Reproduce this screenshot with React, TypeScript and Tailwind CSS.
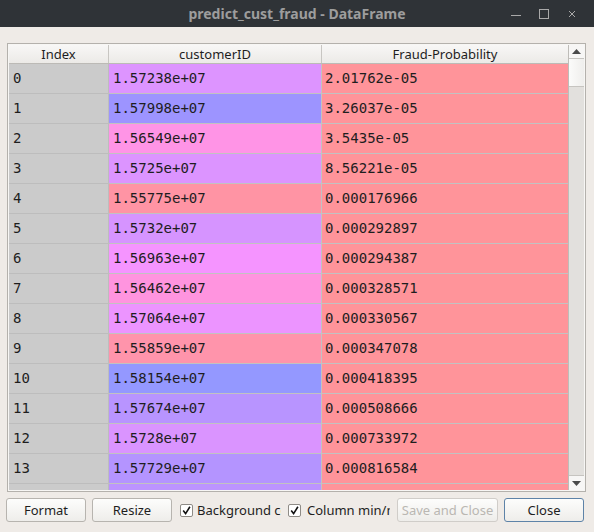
import React from "react";

// Spyder-style background: hsv(h, .7, 1) at alpha .6 over white
function cellColor(h: number) {
  const s = 0.7;
  const v = 1;
  const hh = (h % 1) * 6;
  const i = Math.floor(hh);
  const f = hh - i;
  const p = v * (1 - s);
  const q = v * (1 - s * f);
  const t = v * (1 - s * (1 - f));
  const table = [
    [v, t, p],
    [q, v, p],
    [p, v, t],
    [p, q, v],
    [t, p, v],
    [v, p, q],
  ];
  const [r, g, b] = table[i];
  const mix = (c: number) => Math.round(255 * (0.4 + 0.6 * c));
  return `rgb(${mix(r)},${mix(g)},${mix(b)})`;
}

const ID_MIN = 15565714;
const ID_MAX = 15815443;
const idHue = (v: number) => 0.66 + 0.33 * ((ID_MAX - v) / (ID_MAX - ID_MIN));
const probHue = (v: number) => 0.66 + 0.33 * ((1 - v) / (1 - 2.01762e-5));

const ROWS: [string, number, string][] = [
  ["1.57238e+07", 15723800, "2.01762e-05"],
  ["1.57998e+07", 15799800, "3.26037e-05"],
  ["1.56549e+07", 15654900, "3.5435e-05"],
  ["1.5725e+07", 15725000, "8.56221e-05"],
  ["1.55775e+07", 15577500, "0.000176966"],
  ["1.5732e+07", 15732000, "0.000292897"],
  ["1.56963e+07", 15696300, "0.000294387"],
  ["1.56462e+07", 15646200, "0.000328571"],
  ["1.57064e+07", 15706400, "0.000330567"],
  ["1.55859e+07", 15585900, "0.000347078"],
  ["1.58154e+07", 15815400, "0.000418395"],
  ["1.57674e+07", 15767400, "0.000508666"],
  ["1.5728e+07", 15728000, "0.000733972"],
  ["1.57729e+07", 15772900, "0.000816584"],
  ["1.57635e+07", 15763500, "0.000839121"],
];

const sans = "font-['Noto_Sans','DejaVu_Sans',sans-serif]";
const mono = "font-['DejaVu_Sans_Mono','Liberation_Mono',monospace]";

function Check() {
  return (
    <span className="flex h-[13px] w-[13px] shrink-0 items-center justify-center rounded-[2px] border border-[#8e8b86] bg-white">
      <svg width="9" height="9" viewBox="0 0 9 9">
        <path d="M1.2 4.6 L3.6 7.6 L7.9 0.8" fill="none" stroke="#111" strokeWidth="1.6" />
      </svg>
    </span>
  );
}

function Button({ label, className = "" }: { label: string; className?: string }) {
  return (
    <button
      className={`flex h-[24px] items-center justify-center whitespace-nowrap rounded-[3px] border bg-gradient-to-b from-[#fdfdfc] to-[#eeedea] text-[13px] leading-[20px] ${sans} ${className}`}
    >
      {label}
    </button>
  );
}

export default function App() {
  return (
    <div className="flex h-[532px] w-[594px] flex-col overflow-hidden bg-[#efebe7] text-[#1e1e1e]">
      {/* title bar */}
      <div className="relative flex h-[27px] shrink-0 items-center justify-center bg-[#2f3337]">
        <span className={`text-[14px] font-bold text-[#9d9d9d] ${sans}`}>predict_cust_fraud - DataFrame</span>
        <div className="absolute right-[17px] top-0 flex h-full items-center gap-[18px]">
          <svg width="10" height="10" viewBox="0 0 10 10">
            <path d="M0 6.5 H10" stroke="#a9a9a9" strokeWidth="1" />
          </svg>
          <svg width="10" height="10" viewBox="0 0 10 10">
            <rect x="0.5" y="0.5" width="9" height="9" fill="none" stroke="#a9a9a9" strokeWidth="1" />
          </svg>
          <svg width="10" height="10" viewBox="0 0 10 10">
            <path d="M2 2 L8 8 M8 2 L2 8" stroke="#a9a9a9" strokeWidth="1" />
          </svg>
        </div>
      </div>

      {/* table frame */}
      <div className="pl-[7px] pr-[8px] pt-[16px]">
        <div className="flex h-[449px] border border-[#b4b1ac] bg-[#f7f6f4] p-[1px]">
          <div className="flex min-w-0 flex-1 flex-col overflow-hidden">
            <div className={`flex h-[19px] shrink-0 border-b border-[#bcbab6] bg-gradient-to-b from-[#f8f7f6] to-[#eceae7] text-[13px] leading-[18px] ${sans}`}>
              <div className="w-[100px] shrink-0 border-r border-[#c8c6c2] text-center">Index</div>
              <div className="w-[213px] shrink-0 border-r border-[#c8c6c2] text-center">customerID</div>
              <div className="flex-1 text-center">Fraud-Probability</div>
            </div>
            {ROWS.map(([id, idv, prob], i) => (
              <div key={i} className={`flex h-[30px] shrink-0 text-[14px] leading-[29px] ${mono}`}>
                <div className="w-[100px] shrink-0 border-b border-r border-[#bdbdbd] bg-[#cbcbcb] pl-[4px]">{i}</div>
                <div
                  className="w-[213px] shrink-0 border-b border-r border-[#c2c2c2] pl-[4px]"
                  style={{ backgroundColor: cellColor(idHue(idv)) }}
                >
                  {id}
                </div>
                <div
                  className="flex-1 border-b border-[#c2c2c2] pl-[3px]"
                  style={{ backgroundColor: cellColor(probHue(parseFloat(prob))) }}
                >
                  {prob}
                </div>
              </div>
            ))}
          </div>

          {/* scrollbar */}
          <div className="flex w-[16px] shrink-0 flex-col border-l border-[#bebcb8] bg-[#e2e0dd]">
            <div className="flex h-[14px] shrink-0 items-center justify-center border-b border-[#c6c4c0] bg-[#f7f6f5]">
              <svg width="9" height="5" viewBox="0 0 9 5">
                <path d="M0 5 L4.5 0 L9 5 Z" fill="#4a4a4a" />
              </svg>
            </div>
            <div className="h-[28px] shrink-0 border-b border-[#c6c4c0] bg-gradient-to-r from-[#fbfbfa] to-[#efeeec]" />
            <div className="flex-1" />
            <div className="flex h-[15px] shrink-0 items-center justify-center border-t border-[#c6c4c0] bg-[#f7f6f5]">
              <svg width="9" height="5" viewBox="0 0 9 5">
                <path d="M0 0 L9 0 L4.5 5 Z" fill="#4a4a4a" />
              </svg>
            </div>
          </div>
        </div>
      </div>

      {/* buttons */}
      <div className="mt-[6px] flex items-center pl-[6px]">
        <Button label="Format" className="w-[80px] border-[#b7b4af]" />
        <Button label="Resize" className="ml-[6px] w-[80px] border-[#b7b4af]" />
        <label className={`ml-[8px] flex items-center text-[13px] leading-[20px] ${sans}`}>
          <Check />
          <span className="ml-[4px] w-[84px] overflow-hidden whitespace-nowrap">Background color</span>
        </label>
        <label className={`ml-[7px] flex items-center text-[13px] leading-[20px] ${sans}`}>
          <Check />
          <span className="ml-[6px] w-[83px] overflow-hidden whitespace-nowrap">Column min/max</span>
        </label>
        <Button label="Save and Close" className="ml-[7px] w-[101px] border-[#d0cdc9] text-[#bab7b2]" />
        <Button label="Close" className="ml-[6px] w-[80px] border-[#5e83a8]" />
      </div>
    </div>
  );
}
